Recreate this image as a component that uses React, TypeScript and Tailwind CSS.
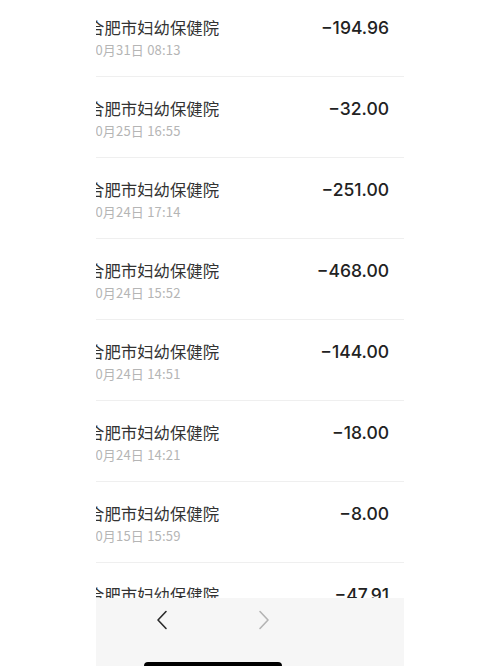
const records = [
  { date: "10月31日 08:13", amount: "−194.96" },
  { date: "10月25日 16:55", amount: "−32.00" },
  { date: "10月24日 17:14", amount: "−251.00" },
  { date: "10月24日 15:52", amount: "−468.00" },
  { date: "10月24日 14:51", amount: "−144.00" },
  { date: "10月24日 14:21", amount: "−18.00" },
  { date: "10月15日 15:59", amount: "−8.00" },
  { date: "10月15日 12:40", amount: "−47.91" },
];

const cjk = { fontFamily: '"Noto Sans CJK SC", "Noto Sans", sans-serif' };
const num = { fontFamily: 'Inter, "Noto Sans", sans-serif' };

export default function App() {
  return (
    <div className="flex h-[666px] w-[500px] bg-white pl-[96px]" style={cjk}>
      <div className="flex h-full w-[308px] flex-col overflow-hidden bg-white">
        <div className="h-[598px] overflow-hidden">
          <div className="-mt-[4px]">
            {records.map((r) => (
              <div key={r.date} className="flex h-[81px] items-start justify-between border-b border-[#efefef] pr-[15px] pt-[20px]">
                <div className="-ml-[8px]">
                  <p className="text-[16.4px] leading-[22px] text-[#333333]">合肥市妇幼保健院</p>
                  <p className="mt-[3px] text-[13px] leading-[18px] tracking-[0.2px] text-[#b5b5b5]">{r.date}</p>
                </div>
                <p className="mt-[1px] text-[17.5px] font-medium leading-[22px] text-[#222222]" style={num}>
                  {r.amount}
                </p>
              </div>
            ))}
          </div>
        </div>
        <div className="relative flex-1 bg-[#f6f6f6]">
          <div className="flex h-[44px] items-center">
            <svg className="ml-[60px]" width="12" height="20" viewBox="0 0 12 20" fill="none">
              <path d="M10 1.5 L2 10 L10 18.5" stroke="#2a2a2a" strokeWidth="1.6" strokeLinecap="round" strokeLinejoin="round" />
            </svg>
            <svg className="ml-[90px]" width="12" height="20" viewBox="0 0 12 20" fill="none">
              <path d="M2 1.5 L10 10 L2 18.5" stroke="#b4b4b4" strokeWidth="1.6" strokeLinecap="round" strokeLinejoin="round" />
            </svg>
          </div>
          <div className="absolute bottom-0 left-[48px] h-[4px] w-[138px] rounded-t-full bg-black" />
        </div>
      </div>
    </div>
  );
}
